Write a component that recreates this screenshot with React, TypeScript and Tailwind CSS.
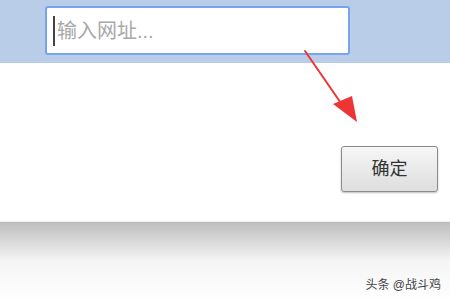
export default function App() {
  return (
    <div
      className="relative flex h-[300px] w-[450px] flex-col overflow-hidden bg-white"
      style={{ fontFamily: '"Liberation Sans", "Noto Sans CJK SC", sans-serif' }}
    >
      <div className="flex h-[63px] items-start bg-[#b9cde9] pl-[45px] pt-[6px]">
        <div className="flex h-[49px] w-[305px] items-center rounded-[3px] border-2 border-[#78a3ee] bg-white pl-[6px]">
          <span className="mr-[2px] h-[30px] w-[2px] bg-[#444]" />
          <span className="text-[20px] text-[#a8a8a8]">输入网址...</span>
        </div>
      </div>

      <div className="flex h-[159px] items-start justify-end border-b border-[#eeeeee] pr-[12px] pt-[83px]">
        <button className="flex h-[46px] w-[97px] items-center justify-center rounded-[3px] border border-[#8a8a8a] bg-gradient-to-b from-[#f6f6f6] to-[#dedede] text-[18px] text-[#333] shadow-[0_1px_2px_rgba(0,0,0,0.25)]">
          确定
        </button>
      </div>

      <div className="flex flex-1 items-end justify-end bg-gradient-to-b from-[#bdbdbd] via-[#f5f5f5] via-50% to-[#fefefe] pb-[7px] pr-[9px]">
        <span className="text-[12px] leading-[16px] text-[#444]">头条 @战斗鸡</span>
      </div>

      <svg className="absolute left-0 top-0" width="450" height="300" viewBox="0 0 450 300">
        <line x1="305" y1="51" x2="345" y2="109" stroke="#ee3535" strokeWidth="2" strokeLinecap="round" />
        <polygon points="357,122 333,104 352,96" fill="#ee3535" />
      </svg>
    </div>
  );
}
